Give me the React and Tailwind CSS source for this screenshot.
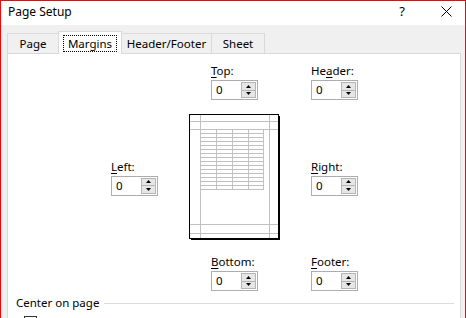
import React from "react";

const Arrow = ({ up }) => (
  <svg width="5" height="3" viewBox="0 0 5 3">
    <polygon points={up ? "2.5,0 5,3 0,3" : "0,0 5,0 2.5,3"} fill="#000" />
  </svg>
);

const Spinner = ({ pre = "", k, post = "" }) => (
  <div className="flex flex-col w-[47px]">
    <div className="leading-[15px] mb-[2px] whitespace-nowrap">
      {pre}
      <span className="underline underline-offset-2">{k}</span>
      {post}
    </div>
    <div className="h-[20px] border border-[#abadb3] bg-white flex p-px">
      <span className="flex-1 pl-[3px] leading-[16px]">0</span>
      <div className="w-[15px] flex flex-col border border-[#b5b5b5] bg-[#e6e6e6]">
        <div className="flex-1 flex items-center justify-center border-b border-[#b5b5b5]">
          <Arrow up />
        </div>
        <div className="flex-1 flex items-center justify-center">
          <Arrow />
        </div>
      </div>
    </div>
  </div>
);

const Preview = () => {
  const rows = [];
  for (let y = 15; y <= 75; y += 4) rows.push(y);
  const cols = [11, 27, 43, 59, 74];
  return (
    <svg width="91" height="126" viewBox="0 0 91 126">
      <rect x="0" y="0" width="90" height="125" fill="#fff" />
      <g stroke="#c0c0c0" strokeWidth="1">
        {[11, 80].map((x) => (
          <line key={"v" + x} x1={x + 0.5} y1="1" x2={x + 0.5} y2="124" />
        ))}
        {[7, 15, 110, 119].map((y) => (
          <line key={"h" + y} x1="1" y1={y + 0.5} x2="89" y2={y + 0.5} />
        ))}
        {rows.map((y) => (
          <line key={"r" + y} x1="11" y1={y + 0.5} x2="75" y2={y + 0.5} />
        ))}
        {cols.map((x) => (
          <line key={"c" + x} x1={x + 0.5} y1="15" x2={x + 0.5} y2="76" />
        ))}
      </g>
      <rect x="0.5" y="0.5" width="89" height="124" fill="none" stroke="#000" />
      <rect x="90" y="2" width="1" height="124" fill="#000" />
      <rect x="2" y="125" width="89" height="1" fill="#000" />
    </svg>
  );
};

export default function App() {
  return (
    <div className="w-[466px] h-[318px] overflow-hidden bg-[#f0f0f0] border-x border-t border-[#f00] flex flex-col font-['Noto_Sans',sans-serif] text-[11.5px] text-black">
      {/* Title bar */}
      <div className="h-[24px] shrink-0 bg-white flex items-center pl-[7px] pr-[13px] text-[12px]">
        <span className="flex-1 pb-[2px]">Page Setup</span>
        <span className="mr-[36px] pb-[2px] text-[13px]">?</span>
        <svg width="11" height="11" viewBox="0 0 11 11" className="mb-[3px]">
          <path d="M0.5 0.5 L10.5 10.5 M10.5 0.5 L0.5 10.5" stroke="#000" strokeWidth="1" />
        </svg>
      </div>

      {/* Tabs */}
      <div className="flex items-end mt-[6px] ml-[6px] relative z-10 leading-[15px]">
        <div className="w-[51px] h-[20px] border-l border-t border-[#d9d9d9] flex items-end justify-center pb-[2px]">
          Page
        </div>
        <div className="w-[64px] h-[23px] -mb-px bg-white border-x border-t border-[#d9d9d9] flex items-end justify-center pb-[2px]">
          <span className="border border-dotted border-black px-[4px] leading-[15px]">Margins</span>
        </div>
        <div className="w-[90px] h-[20px] border-r border-t border-[#d9d9d9] flex items-end justify-center pb-[2px]">
          Header/Footer
        </div>
        <div className="w-[53px] h-[20px] border-r border-t border-[#d9d9d9] flex items-end justify-center pb-[2px]">
          Sheet
        </div>
      </div>

      {/* Panel */}
      <div className="flex-1 bg-white border border-[#d9d9d9] ml-[6px] mr-[4px] pt-[9px]">
        <div className="pl-[103px]">
          <div className="grid grid-cols-[47px_91px_47px] grid-rows-[37px_126px_37px] gap-x-[31px] gap-y-[14px]">
            <div />
            <div className="justify-self-center">
              <Spinner k="T" post="op:" />
            </div>
            <Spinner pre="He" k="a" post="der:" />

            <div className="self-center">
              <Spinner k="L" post="eft:" />
            </div>
            <Preview />
            <div className="self-center">
              <Spinner k="R" post="ight:" />
            </div>

            <div />
            <div className="justify-self-center">
              <Spinner k="B" post="ottom:" />
            </div>
            <Spinner k="F" post="ooter:" />
          </div>
        </div>

        {/* Center on page */}
        <div className="flex items-center mt-[4px] pl-[8px] pr-[6px] leading-[15px]">
          <span>Center on page</span>
          <div className="flex-1 h-px bg-[#dcdcdc] ml-[5px] mt-px" />
        </div>
        <div className="mt-[6px] ml-[16px] w-[13px] h-[13px] border border-[#333] bg-white" />
      </div>
    </div>
  );
}
